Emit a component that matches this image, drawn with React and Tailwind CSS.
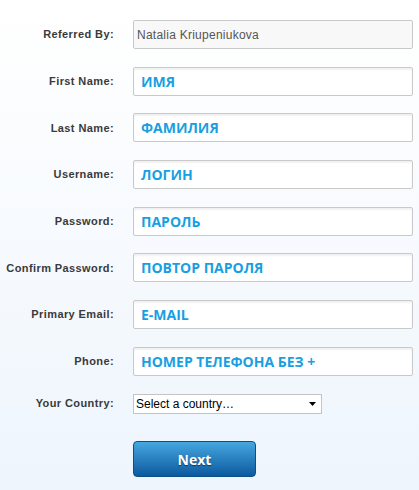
import React from 'react';

const FIELDS = [
    ['First Name:', 'ИМЯ'],
    ['Last Name:', 'ФАМИЛИЯ'],
    ['Username:', 'ЛОГИН'],
    ['Password:', 'ПАРОЛЬ'],
    ['Confirm Password:', 'ПОВТОР ПАРОЛЯ'],
    ['Primary Email:', 'E-MAIL'],
    ['Phone:', 'НОМЕР ТЕЛЕФОНА БЕЗ +'],
];

const Label = ({ children }) => (
    <span className="text-right text-[11px] tracking-[0.4px] font-bold text-[#3a3a3a] font-['Liberation_Sans',Arial,sans-serif]">
        {children}
    </span>
);

const App = () => (
    <div className="w-[419px] h-[490px] overflow-hidden bg-gradient-to-b from-white to-[#eef5fd]">
        <div className="grid grid-cols-[114px_280px] items-center gap-x-[19px] gap-y-[17.7px] pt-[20px]">
            <Label>Referred By:</Label>
            <div className="h-[29px] flex items-center pl-[3px] rounded-[2px] border border-[#c9c9c9] bg-[#f8f8f8] text-[12px] tracking-[0.25px] text-[#555] font-['Liberation_Sans',Arial,sans-serif]">
                Natalia Kriupeniukova
            </div>

            {FIELDS.map(([label, value]) => (
                <React.Fragment key={label}>
                    <Label>{label}</Label>
                    <div className="h-[29px] flex items-center pl-[7px] rounded-[2px] border border-[#c9c9c9] bg-white shadow-[inset_0_2px_2px_rgba(0,0,0,0.06)] text-[14px] font-bold text-[#189fe3] font-['Open_Sans',sans-serif]">
                        {value}
                    </div>
                </React.Fragment>
            ))}

            <Label>Your Country:</Label>
            <div className="w-[189px] h-[20px] flex items-center justify-between px-[2px] border border-[#c4c4c4] bg-white text-[12px] text-black font-['Liberation_Sans',Arial,sans-serif]">
                <span>Select a country…</span>
                <svg width="8" height="4" viewBox="0 0 8 4" className="mr-[2px]">
                    <path d="M0 0h7L3.5 4z" fill="#000" />
                </svg>
            </div>

            <div />
            <button className="mt-[10px] w-[123px] h-[36px] rounded-[4px] border border-[#0c4f86] bg-gradient-to-b from-[#46a7e0] to-[#0b5a9e] text-white text-[14px] font-bold [text-shadow:0_1px_1px_rgba(0,0,0,0.5)] font-['Open_Sans',sans-serif]">
                Next
            </button>
        </div>
    </div>
);

export default App;
